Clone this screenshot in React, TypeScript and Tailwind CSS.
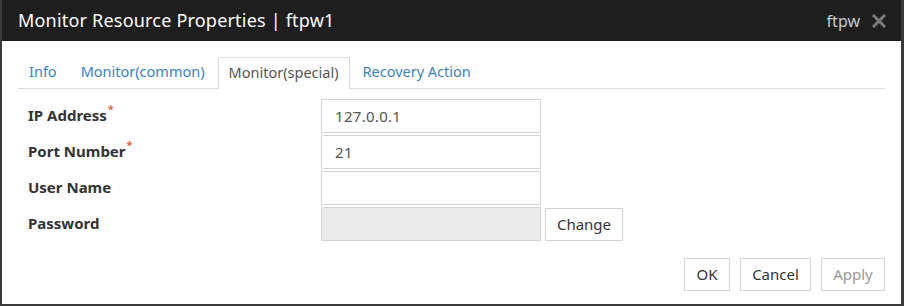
import React from 'react';

const font = { fontFamily: '"Noto Sans", "Open Sans", Arial, sans-serif' };

function Tab({ label, active }: { label: string; active?: boolean }) {
  if (active) {
    return (
      <div className="h-[32px] px-[10px] flex items-center text-[14.5px] text-[#555] bg-white border border-[#ddd] border-b-white -mb-px rounded-t-[2px]">
        {label}
      </div>
    );
  }
  return <div className="h-[32px] px-[11px] flex items-center text-[14.5px] text-[#3b83c0]">{label}</div>;
}

function Row({ label, required, value, disabled, extra }: { label: string; required?: boolean; value?: string; disabled?: boolean; extra?: React.ReactNode }) {
  return (
    <div className="flex items-center h-[34px]">
      <div className="w-[303px] pl-[10px] pb-[2px] text-[15px] font-bold text-[#333] flex items-start">
        {label}
        {required && <span className="text-[#e8603c] text-[11px] leading-none ml-px -mt-[1px]">*</span>}
      </div>
      <div className={`w-[220px] h-[34px] border border-[#d4d4d4] flex items-center pl-[13px] text-[15px] tracking-[0.3px] text-[#555] ${disabled ? 'bg-[#ececec]' : 'bg-white'}`}>
        {value}
      </div>
      {extra}
    </div>
  );
}

function Btn({ label, w, dim }: { label: string; w: string; dim?: boolean }) {
  return (
    <div className={`${w} h-[33px] border border-[#d4d4d4] bg-white flex items-center justify-center text-[15px] ${dim ? 'text-[#999]' : 'text-[#333]'}`}>
      {label}
    </div>
  );
}

export default function App() {
  return (
    <div className="w-[904px] h-[306px] bg-white" style={font}>
      <div className="w-full h-full flex flex-col border-l-[2px] border-r-[3px] border-b-[2px] border-[#3a3a3a]">
        <div className="h-[41px] shrink-0 bg-[#1e1e1e] flex items-center justify-between pl-[16px] pr-[15px]">
          <span className="text-white text-[18px] tracking-[0.2px]">Monitor Resource Properties | ftpw1</span>
          <div className="flex items-center gap-[12px]">
            <span className="text-[#c9c9c9] text-[16px]">ftpw</span>
            <svg width="14" height="14" viewBox="0 0 14 14">
              <path d="M2 2 L12 12 M12 2 L2 12" stroke="#7a7a7a" strokeWidth="3" strokeLinecap="square" />
            </svg>
          </div>
        </div>
        <div className="flex-1 px-[16px] pt-[15px]">
          <div className="flex items-end gap-[2px] border-b border-[#ddd]">
            <Tab label="Info" />
            <Tab label="Monitor(common)" />
            <Tab label="Monitor(special)" active />
            <Tab label="Recovery Action" />
          </div>
          <div className="pt-[10px] flex flex-col gap-[2px]">
            <Row label="IP Address" required value="127.0.0.1" />
            <Row label="Port Number" required value="21" />
            <Row label="User Name" />
            <Row
              label="Password"
              disabled
              extra={
                <div className="ml-[4px]">
                  <Btn label="Change" w="w-[78px]" />
                </div>
              }
            />
          </div>
          <div className="flex justify-end gap-[10px] mt-[17px]">
            <Btn label="OK" w="w-[46px]" />
            <Btn label="Cancel" w="w-[71px]" />
            <Btn label="Apply" w="w-[64px]" dim />
          </div>
        </div>
      </div>
    </div>
  );
}
